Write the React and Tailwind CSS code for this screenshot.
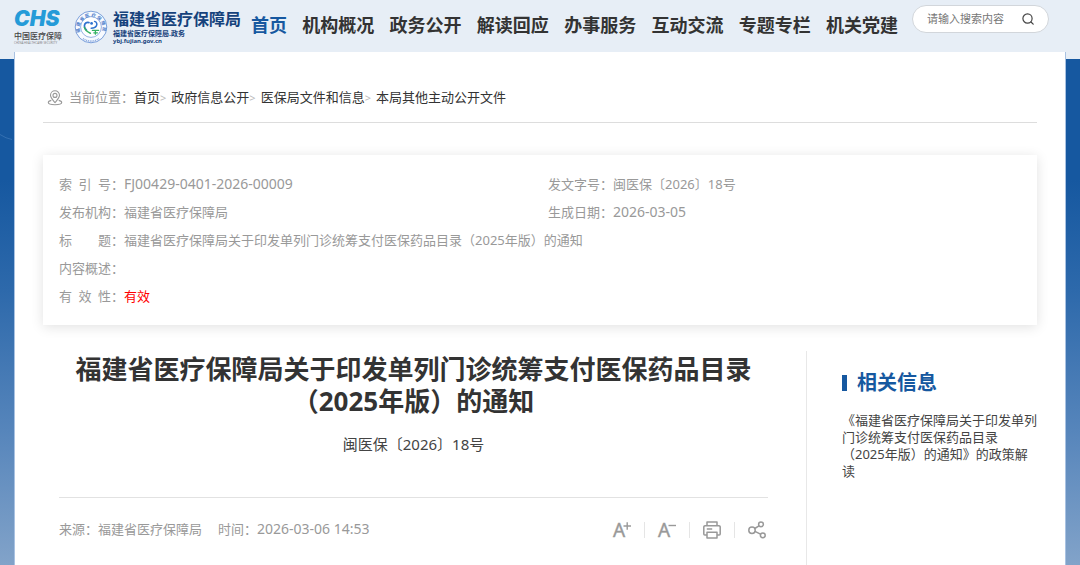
const navItems = [
  "首页",
  "机构概况",
  "政务公开",
  "解读回应",
  "办事服务",
  "互动交流",
  "专题专栏",
  "机关党建",
];

const crumbs = ["首页", "政府信息公开", "医保局文件和信息", "本局其他主动公开文件"];

function Emblem() {
  return (
    <svg viewBox="0 0 34 34" className="size-[34px] shrink-0" fill="none">
      <circle cx="17" cy="17" r="15.8" fill="#f7faff" stroke="#6d95d6" strokeWidth="0.9" />
      <circle cx="17" cy="17" r="10.4" fill="#fff" stroke="#7c9fdb" strokeWidth="0.8" />
      <path id="ring" d="M7.5 25 A 11.6 11.6 0 1 1 26.5 25" />
      <text fontSize="4.4" fontWeight="700" fill="#4c7cc9">
        <textPath href="#ring" startOffset="3">福 建 省 医 疗 保 障 局</textPath>
      </text>
      <path d="M9 28.6a14 14 0 0 0 16 0" stroke="#88a8df" strokeWidth="1.6" strokeDasharray="1 0.8" />
      {/* 心形与人形 */}
      <path d="M15 12.6c-2.400-.8-4.600.8-4.600 3.400 0 1.600.8 3 2 4.200" stroke="#2f73cf" strokeWidth="1.7" strokeLinecap="round" />
      <path d="M20.600 11.400c2.200.6 2.800 2.600 1.800 4.400-1 1.800-3 2.400-5.200 2.400" stroke="#2f73cf" strokeWidth="1.5" strokeLinecap="round" />
      <circle cx="17.600" cy="13.400" r="1.400" fill="#2f73cf" />
      <path d="M10.400 17.400c.8 2.800 3 4.600 6 5.800" stroke="#35b163" strokeWidth="1.5" strokeLinecap="round" />
      <path d="M18.400 20.400h6.200M19.800 22.800h3.600M21.400 20.400v3.800" stroke="#35b163" strokeWidth="1.3" strokeLinecap="round" />
    </svg>
  );
}

function PinIcon() {
  return (
    <svg viewBox="0 0 16 16" className="size-4 shrink-0" fill="none" stroke="#999" strokeWidth="1.1" strokeLinejoin="round">
      <path d="M8 12.6C5.500 9.600 3.500 7.700 3.500 5.300a4.500 4.500 0 0 1 9 0c0 2.400-2 4.300-4.500 7.300z" />
      <circle cx="8" cy="5.400" r="2" />
      <path d="M4.300 10.400C2.600 10.800 1.300 11.500 1.300 12.500c0 1.300 3 2.200 6.700 2.200s6.700-.9 6.700-2.200c0-1-1.300-1.700-3-2.100" />
    </svg>
  );
}

function SearchIcon() {
  return (
    <svg viewBox="0 0 12 12" className="size-3" fill="none" stroke="#444" strokeWidth="1.2" strokeLinecap="round">
      <circle cx="5.500" cy="5.500" r="4.600" />
      <path d="M9 9l2.200 2.200" />
    </svg>
  );
}

function FontIcon({ plus }) {
  return (
    <svg viewBox="0 0 18 18" className="size-[18px] overflow-visible">
      <text x="0" y="16" fontSize="19" fill="#999" stroke="#999" strokeWidth="0.4">A</text>
      <path d={plus ? "M10.500 5h7.500M14.200 1.300v7.400" : "M10.500 4.500h7.500"} stroke="#999" strokeWidth="1.4" />
    </svg>
  );
}

function PrintIcon() {
  return (
    <svg viewBox="0 0 18 18" className="size-[18px]" fill="none" stroke="#999" strokeWidth="1.5" strokeLinejoin="round">
      <path d="M4 4.800V1h10v3.800" />
      <path d="M4 14H1.800a1 1 0 0 1-1-1V6a1.200 1.200 0 0 1 1.200-1.200h14A1.200 1.200 0 0 1 17.200 6v7a1 1 0 0 1-1 1H14" />
      <path d="M4 11.200h10V17H4zM3.800 8h5.400" />
    </svg>
  );
}

function ShareIcon() {
  return (
    <svg viewBox="0 0 18 18" className="size-[18px]" fill="none" stroke="#999" strokeWidth="1.5">
      <circle cx="4" cy="9.300" r="3.200" />
      <circle cx="13" cy="3.300" r="2.400" />
      <circle cx="14.800" cy="14.300" r="2.400" />
      <path d="M6.700 7.500l4.300-2.700M7 10.400l5.500 2.800" />
    </svg>
  );
}

function Field({ label, children }) {
  return (
    <div className="flex">
      <dt className="flex shrink-0">
        <span className="w-[52px] [text-align-last:justify]">{label}</span>：
      </dt>
      <dd>{children}</dd>
    </div>
  );
}

function Header() {
  return (
    <header className="flex h-[52px] items-start pl-3.5 pr-[31px]">
      <a href="#" className="flex w-12 shrink-0 flex-col pt-2 whitespace-nowrap">
        <span className="font-[Inter] text-[21px] leading-[22px] font-black text-[#259bd8] italic">CHS</span>
        <span className="text-[8px] leading-3 font-medium text-[#444]">中国医疗保障</span>
        <span className="text-[3px] leading-[3px] text-[#888]">CHINA HEALTHCARE SECURITY</span>
      </a>
      <a href="#" className="ml-3 flex shrink-0 gap-[5px] pt-2.5 text-[#16427c]">
        <Emblem />
        <span className="flex flex-col font-bold whitespace-nowrap">
          <span className="text-base leading-[19px]">福建省医疗保障局</span>
          <span className="text-[7px] leading-[9px]">福建省医疗保障局.政务</span>
          <span className="text-[6px] leading-[7px]">ybj.fujian.gov.cn</span>
        </span>
      </a>
      <nav className="mr-3.5 ml-2.5 flex flex-1 justify-between pt-3 text-lg leading-[26px] font-bold whitespace-nowrap text-[#333]">
        {navItems.map((item, i) => (
          <a key={item} href="#" className={i === 0 ? "text-[#1658a0]" : ""}>
            {item}
          </a>
        ))}
      </nav>
      <form className="mt-[5px] flex h-7 w-[137px] shrink-0 items-center rounded-full border border-[#d2d6db] bg-white pr-3.5 pl-3.5">
        <input
          type="text"
          aria-label="搜索"
          placeholder="请输入搜索内容"
          className="min-w-0 flex-1 text-[11px] outline-none placeholder:text-[#777]"
        />
        <button type="button" aria-label="提交搜索">
          <SearchIcon />
        </button>
      </form>
    </header>
  );
}

export default function App() {
  return (
    <div className="relative flex min-h-screen flex-col bg-[linear-gradient(180deg,#e7eef6_0,#e7eef6_59px,#1658a0_59px,#1658a0_180px,#2d69ab_290px,#5685bb_430px,#82a3c9_565px)] font-['Noto_Sans','Noto_Sans_CJK_SC',sans-serif] text-[13px] text-[#999]">
      <svg viewBox="0 0 14 8" className="absolute top-[133px] left-0 h-2 w-3.5" fill="none" stroke="#3470b2">
        <path d="M0 1.500Q6 5.500 12 6.500" />
      </svg>
      <Header />
      <main className="mx-3.5 flex-1 border-x border-[#a9c2e2] bg-white px-7">
        <div className="flex h-[71px] items-center gap-1.5 border-b border-[#ddd] pt-[22px] pl-1">
          <PinIcon />
          <div className="flex">
            <span>当前位置：</span>
            {crumbs.map((name, i) => (
              <span key={name}>
                {i > 0 && <span className="mr-[5px] text-[11px] text-[#bbb]">&gt;</span>}
                <a href="#" className="text-[#333]">{name}</a>
              </span>
            ))}
          </div>
        </div>

        <dl className="mt-8 grid grid-cols-2 bg-white px-4 py-[15px] leading-7 shadow-[0_2px_12px_rgba(0,0,0,0.12)]">
          <Field label="索 引 号">
            <span className="text-sm leading-7">FJ00429-0401-2026-00009</span>
          </Field>
          <div className="pl-2">
            <Field label="发文字号">闽医保〔2026〕18号</Field>
          </div>
          <Field label="发布机构">福建省医疗保障局</Field>
          <div className="pl-2">
            <Field label="生成日期">
              <span className="text-sm leading-7">2026-03-05</span>
            </Field>
          </div>
          <div className="col-span-2">
            <Field label="标 题">福建省医疗保障局关于印发单列门诊统筹支付医保药品目录（2025年版）的通知</Field>
            <Field label="内容概述" />
            <Field label="有 效 性">
              <span className="text-[#f00]">有效</span>
            </Field>
          </div>
        </dl>

        <div className="flex pt-[26px]">
          <article className="min-w-0 flex-1 px-4 pt-0.5">
            <h1 className="text-center text-[26px] leading-8 font-bold text-[#333]">
              福建省医疗保障局关于印发单列门诊统筹支付医保药品目录（2025年版）的通知
            </h1>
            <p className="mt-4 text-center text-[15px] leading-[22px] text-[#444]">闽医保〔2026〕18号</p>
            <div className="mt-[42px] flex h-16 items-center justify-between border-t border-[#e2e2e2]">
              <div className="flex items-center gap-4">
                <span>来源：福建省医疗保障局</span>
                <span>
                  时间：<time className="text-sm">2026-03-06 14:53</time>
                </span>
              </div>
              <div className="flex items-center gap-[13px] pr-0.5">
                <button type="button" aria-label="放大字体"><FontIcon plus /></button>
                <span className="h-4 w-px bg-[#e5e5e5]" />
                <button type="button" aria-label="缩小字体"><FontIcon /></button>
                <span className="h-4 w-px bg-[#e5e5e5]" />
                <button type="button" aria-label="打印"><PrintIcon /></button>
                <span className="h-4 w-px bg-[#e5e5e5]" />
                <button type="button" aria-label="分享"><ShareIcon /></button>
              </div>
            </div>
          </article>

          <aside className="ml-[22px] min-h-[214px] w-[231px] shrink-0 border-l border-[#e8e8e8] pt-4 pl-[35px]">
            <h2 className="flex items-center gap-2.5 text-xl leading-8 font-bold text-[#1658a0]">
              <span className="h-4 w-[5px] bg-[#1658a0]" />
              相关信息
            </h2>
            <a href="#" className="mt-[13px] block leading-[17px] text-[#444]">
              《福建省医疗保障局关于印发单列门诊统筹支付医保药品目录（2025年版）的通知》的政策解读
            </a>
          </aside>
        </div>
      </main>
    </div>
  );
}
